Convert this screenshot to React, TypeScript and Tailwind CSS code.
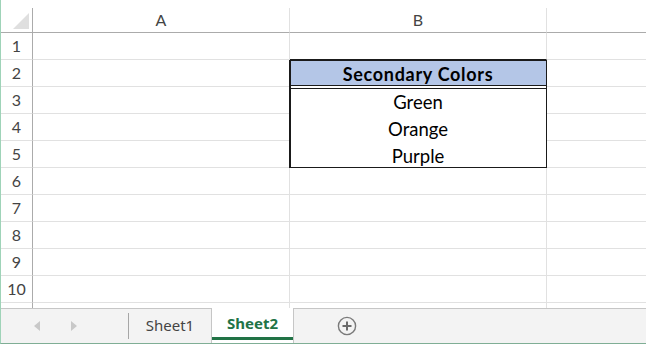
import React from "react";

const rows = [1, 2, 3, 4, 5, 6, 7, 8, 9, 10];

function BCell({ r }: { r: number }) {
  if (r === 1)
    return <div className="border-r border-b border-r-[#e1e1e1] border-b-[#1a1a1a]" />;
  if (r === 2)
    return (
      <div className="flex items-center justify-center border-r border-r-[#1a1a1a] bg-[#b4c6e7] shadow-[inset_1px_0_0_#1a1a1a,inset_0_1px_0_#1a1a1a,inset_0_-1px_0_#ffffff,inset_0_-2px_0_#1a1a1a] pt-[1px] font-['Lato'] text-[18px] font-bold leading-none tracking-[0.7px] text-black">
        Secondary Colors
      </div>
    );
  if (r === 3)
    return (
      <div className="flex items-center justify-center border-r border-r-[#1a1a1a] pt-[4px] font-['Lato'] text-[18.5px] leading-none text-black shadow-[inset_1px_0_0_#1a1a1a,inset_0_1px_0_#ffffff,inset_0_2px_0_#1a1a1a]">
        Green
      </div>
    );
  if (r === 4)
    return (
      <div className="flex items-center justify-center border-r border-r-[#1a1a1a] pt-[4px] font-['Lato'] text-[18.5px] leading-none text-black shadow-[inset_1px_0_0_#1a1a1a]">
        Orange
      </div>
    );
  if (r === 5)
    return (
      <div className="flex items-center justify-center border-r border-r-[#1a1a1a] pt-[4px] font-['Lato'] text-[18.5px] leading-none text-black shadow-[inset_1px_0_0_#1a1a1a,inset_0_-1px_0_#1a1a1a]">
        Purple
      </div>
    );
  return <div className="border-r border-b border-[#e1e1e1]" />;
}

export default function App() {
  return (
    <div className="flex h-[344px] w-[646px] flex-col overflow-hidden border-l border-b border-l-[#9fd3b8] border-b-[#7fae95] bg-white">
      <div className="h-[8px] shrink-0" />
      <div className="grid shrink-0 grid-cols-[32px_257px_257px_1fr]">
        {/* header row */}
        <div className="relative h-[25px] border-r border-b border-[#ababab]">
          <svg className="absolute left-[12px] top-[5px]" width="16" height="16" viewBox="0 0 16 16">
            <polygon points="16,0 16,16 0,16" fill="#dfdfdf" />
          </svg>
        </div>
        <div className="flex h-[25px] items-center justify-center border-r border-b border-r-[#e1e1e1] border-b-[#ababab] font-['Lato'] text-[16px] leading-none text-[#444]">
          A
        </div>
        <div className="flex h-[25px] items-center justify-center border-r border-b border-r-[#e1e1e1] border-b-[#ababab] font-['Lato'] text-[16px] leading-none text-[#444]">
          B
        </div>
        <div className="h-[25px] border-b border-[#ababab]" />
        {rows.map((r) => (
          <React.Fragment key={r}>
            <div className="flex h-[27px] items-center justify-center border-r border-b border-r-[#ababab] border-b-[#e1e1e1] font-['Lato'] text-[16px] leading-none text-[#444]">
              {r}
            </div>
            {r >= 2 && r <= 5 ? (
              <div className="h-[27px] border-r border-r-[#1a1a1a] shadow-[inset_0_-1px_0_#e1e1e1]" />
            ) : (
              <div className="h-[27px] border-r border-b border-[#e1e1e1]" />
            )}
            <BCell r={r} />
            <div className="h-[27px] border-b border-[#e1e1e1]" />
          </React.Fragment>
        ))}
      </div>
      <div className="grid h-[5px] shrink-0 grid-cols-[32px_257px_257px_1fr]">
        <div className="border-r border-[#ababab]" />
        <div className="border-r border-[#e1e1e1]" />
        <div className="border-r border-[#e1e1e1]" />
        <div />
      </div>
      <div className="flex flex-1 items-stretch border-t border-[#c6c6c6] bg-[#f3f3f3] font-['Noto_Sans'] text-[15px]">
        <div className="flex w-[127px] items-center">
          <svg className="ml-[33px]" width="6" height="10" viewBox="0 0 6 10">
            <polygon points="6,0 6,10 0,5" fill="#c8c8c8" />
          </svg>
          <svg className="ml-[31px]" width="6" height="10" viewBox="0 0 6 10">
            <polygon points="0,0 0,10 6,5" fill="#c8c8c8" />
          </svg>
        </div>
        <div className="my-[4px] w-[1px] bg-[#a6a6a6]" />
        <div className="flex w-[83px] items-center justify-center border-r border-[#c6c6c6] pb-[2px] text-[#444]">
          Sheet1
        </div>
        <div className="-mt-[1px] flex w-[82px] flex-col border-r border-[#c6c6c6] bg-white">
          <div className="flex flex-1 items-center justify-center pt-[1px] font-bold text-[#217346]">
            Sheet2
          </div>
          <div className="mb-[3px] h-[3px] bg-[#217346]" />
        </div>
        <div className="flex flex-1 items-center pl-[43px]">
          <svg width="20" height="20" viewBox="0 0 20 20">
            <circle cx="10" cy="10" r="8.6" fill="none" stroke="#7a7a7a" strokeWidth="1.4" />
            <path d="M10 5.5v9M5.5 10h9" stroke="#6a6a6a" strokeWidth="2" />
          </svg>
        </div>
      </div>
    </div>
  );
}
